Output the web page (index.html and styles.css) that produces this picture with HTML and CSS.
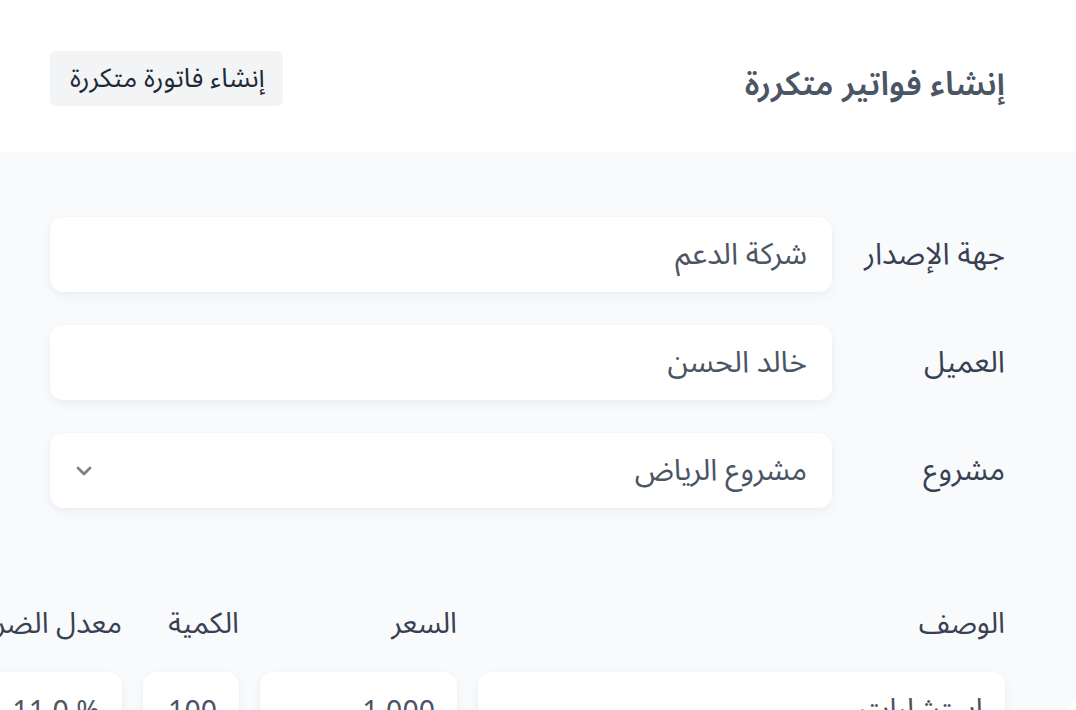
FILE: index.html
```html
<!DOCTYPE html>
<html lang="ar" dir="rtl">
<head>
<meta charset="utf-8">
<title>إنشاء فواتير متكررة</title>
<link rel="stylesheet" href="styles.css">
</head>
<body>
<header class="topbar">
  <h1 class="title">إنشاء فواتير متكررة</h1>
  <button class="btn">إنشاء فاتورة متكررة</button>
</header>
<main class="panel">
  <div class="form">
    <label class="lbl">جهة الإصدار</label>
    <div class="field">شركة الدعم</div>
    <label class="lbl">العميل</label>
    <div class="field">خالد الحسن</div>
    <label class="lbl">مشروع</label>
    <div class="field select">
      <span>مشروع الرياض</span>
      <svg class="chev" width="16" height="10" viewBox="0 0 16 10"><path d="M2 2 L8 8 L14 2" fill="none" stroke="#808080" stroke-width="2.8" stroke-linecap="round" stroke-linejoin="round"/></svg>
    </div>
  </div>
  <div class="items">
    <div class="th">الوصف</div>
    <div class="th">السعر</div>
    <div class="th">الكمية</div>
    <div class="th">معدل الضريبة</div>
    <div class="cell">استشارات</div>
    <div class="cell num"><span dir="ltr">1,000</span></div>
    <div class="cell num"><span dir="ltr">100</span></div>
    <div class="cell num"><span dir="ltr">11.0 %</span></div>
  </div>
</main>
</body>
</html>
```
FILE: styles.css
```css
* { box-sizing: border-box; }
html, body { margin: 0; padding: 0; background: #ffffff; }
body {
  font-family: "Noto Sans Arabic", "Noto Sans", "DejaVu Sans", sans-serif;
  color: #374151;
  overflow: hidden;
  width: 1076px;
  height: 710px;
}
.topbar {
  height: 152px;
  display: flex;
  align-items: center;
  justify-content: space-between;
  padding: 0 71px 0 50px;
}
.title {
  margin: 16px 0 0 0;
  font-size: 33px;
  font-weight: 600;
  color: #4b5563;
}
.btn {
  font-family: inherit;
  height: 55px;
  padding: 0 18px 0 20px;
  border: none;
  border-radius: 6px;
  background: #f3f4f6;
  color: #1f2937;
  font-size: 26.5px;
  margin-top: 5px;
}
.panel {
  background: #f8fafc;
  padding: 65px 71px 0 0;
  height: 562px;
  border-bottom-left-radius: 24px;
  border-bottom-right-radius: 24px;
  overflow: hidden;
}
.form {
  display: grid;
  grid-template-columns: 173px 782px;
  grid-auto-rows: 75px;
  row-gap: 33px;
  align-items: center;
}
.lbl {
  font-size: 30px;
  color: #374151;
}
.field {
  height: 75px;
  background: #ffffff;
  border-radius: 13px;
  box-shadow: 0 4px 10px rgba(100, 116, 139, 0.08), 0 0 2px rgba(100, 116, 139, 0.05);
  display: flex;
  align-items: center;
  padding: 0 25px 0 26px;
  font-size: 30px;
  color: #4b5563;
}
.select { justify-content: space-between; }
.chev { display: block; }
.items {
  margin-top: 98px;
  display: grid;
  grid-template-columns: 527px 197px 96px 180px;
  column-gap: 21px;
  row-gap: 30px;
  width: 1100px;
}
.th {
  font-size: 29px;
  color: #374151;
  height: 36px;
  line-height: 36px;
}
.cell {
  height: 75px;
  background: #ffffff;
  border-radius: 13px;
  box-shadow: 0 4px 10px rgba(100, 116, 139, 0.08), 0 0 2px rgba(100, 116, 139, 0.05);
  display: flex;
  align-items: center;
  padding: 0 22px;
  font-size: 30px;
  color: #4b5563;
}
.num { font-family: "Noto Sans", "Inter", sans-serif; font-size: 28.5px; }
```
